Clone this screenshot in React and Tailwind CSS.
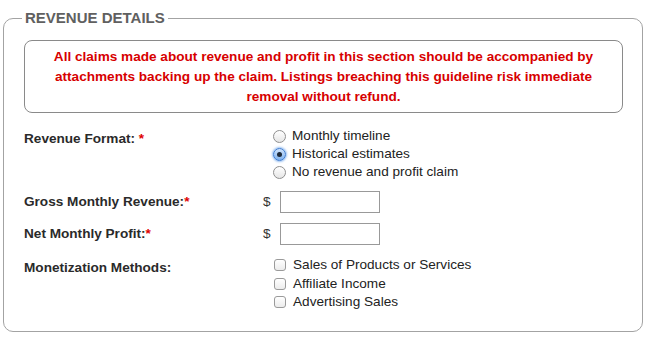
import React from "react";

const font = { fontFamily: '"Liberation Sans", Arial, Helvetica, sans-serif' };

function Radio({ checked, label }) {
  return (
    <label className="flex items-center h-[18px] text-[13.6px] text-[#222]">
      {checked ? (
        <span className="relative flex items-center justify-center w-[13px] h-[13px] rounded-full border border-[#3d7bd1] bg-gradient-to-b from-[#cfe3fb] to-[#7fb2ee] shadow-[0_0_2px_1px_rgba(70,140,230,0.55)]">
          <span className="w-[5px] h-[5px] rounded-full bg-[#1d2a3a]" />
        </span>
      ) : (
        <span className="w-[13px] h-[13px] rounded-full border border-[#8f8f8f] bg-gradient-to-b from-white to-[#e6e6e6]" />
      )}
      <span className="ml-[6px]">{label}</span>
    </label>
  );
}

function Check({ label }) {
  return (
    <label className="flex items-center h-[18.5px] text-[13.6px] text-[#222]">
      <span className="w-[12px] h-[12px] rounded-[3px] border border-[#9a9a9a] bg-gradient-to-b from-white to-[#ececec]" />
      <span className="ml-[7px]">{label}</span>
    </label>
  );
}

function Label({ children, star, space }) {
  return (
    <div className="w-[239px] shrink-0 text-[13.6px] font-bold text-[#2a2a2a]">
      {children}
      {star && <span className="text-[#e00000]">{space ? " *" : "*"}</span>}
    </div>
  );
}

function MoneyField() {
  return (
    <div className="flex items-center">
      <span className="text-[13.6px] text-[#333] w-[17px]">$</span>
      <input type="text" className="w-[100px] h-[22px] border border-[#999] bg-white outline-none px-1 text-[13px]" />
    </div>
  );
}

export default function App() {
  return (
    <div className="w-[650px] h-[342px] bg-white pt-[10px]" style={font}>
      <fieldset className="mx-[3px] w-[640px] h-[322px] border border-[#a3a3a3] rounded-[10px] pl-[18px] pr-[19px]">
        <legend className="px-[3px] text-[15px] leading-[16px] font-bold text-[#606060] uppercase">Revenue Details</legend>

        <div className="pl-[2px]">
          <div className="mt-[14px] border border-[#8a8a8a] rounded-[8px] pt-[6px] pb-[5px] text-center text-[13.6px] leading-[20px] font-bold text-[#d70000]">
            All claims made about revenue and profit in this section should be accompanied by
            <br />
            attachments backing up the claim. Listings breaching this guideline risk immediate
            <br />
            removal without refund.
          </div>

          <div className="mt-[14px] flex items-start">
            <div className="pt-[2px]">
              <Label star space>Revenue Format:</Label>
            </div>
            <div className="pl-[10px] flex flex-col">
              <Radio label="Monthly timeline" />
              <Radio checked label="Historical estimates" />
              <Radio label="No revenue and profit claim" />
            </div>
          </div>

          <div className="mt-[10px] flex items-center">
            <Label star>Gross Monthly Revenue:</Label>
            <MoneyField />
          </div>

          <div className="mt-[10px] flex items-center">
            <Label star>Net Monthly Profit:</Label>
            <MoneyField />
          </div>

          <div className="mt-[11px] flex items-start">
            <div className="pt-[2px]">
              <Label>Monetization Methods:</Label>
            </div>
            <div className="pl-[11px] flex flex-col">
              <Check label="Sales of Products or Services" />
              <Check label="Affiliate Income" />
              <Check label="Advertising Sales" />
            </div>
          </div>
        </div>
      </fieldset>
    </div>
  );
}
